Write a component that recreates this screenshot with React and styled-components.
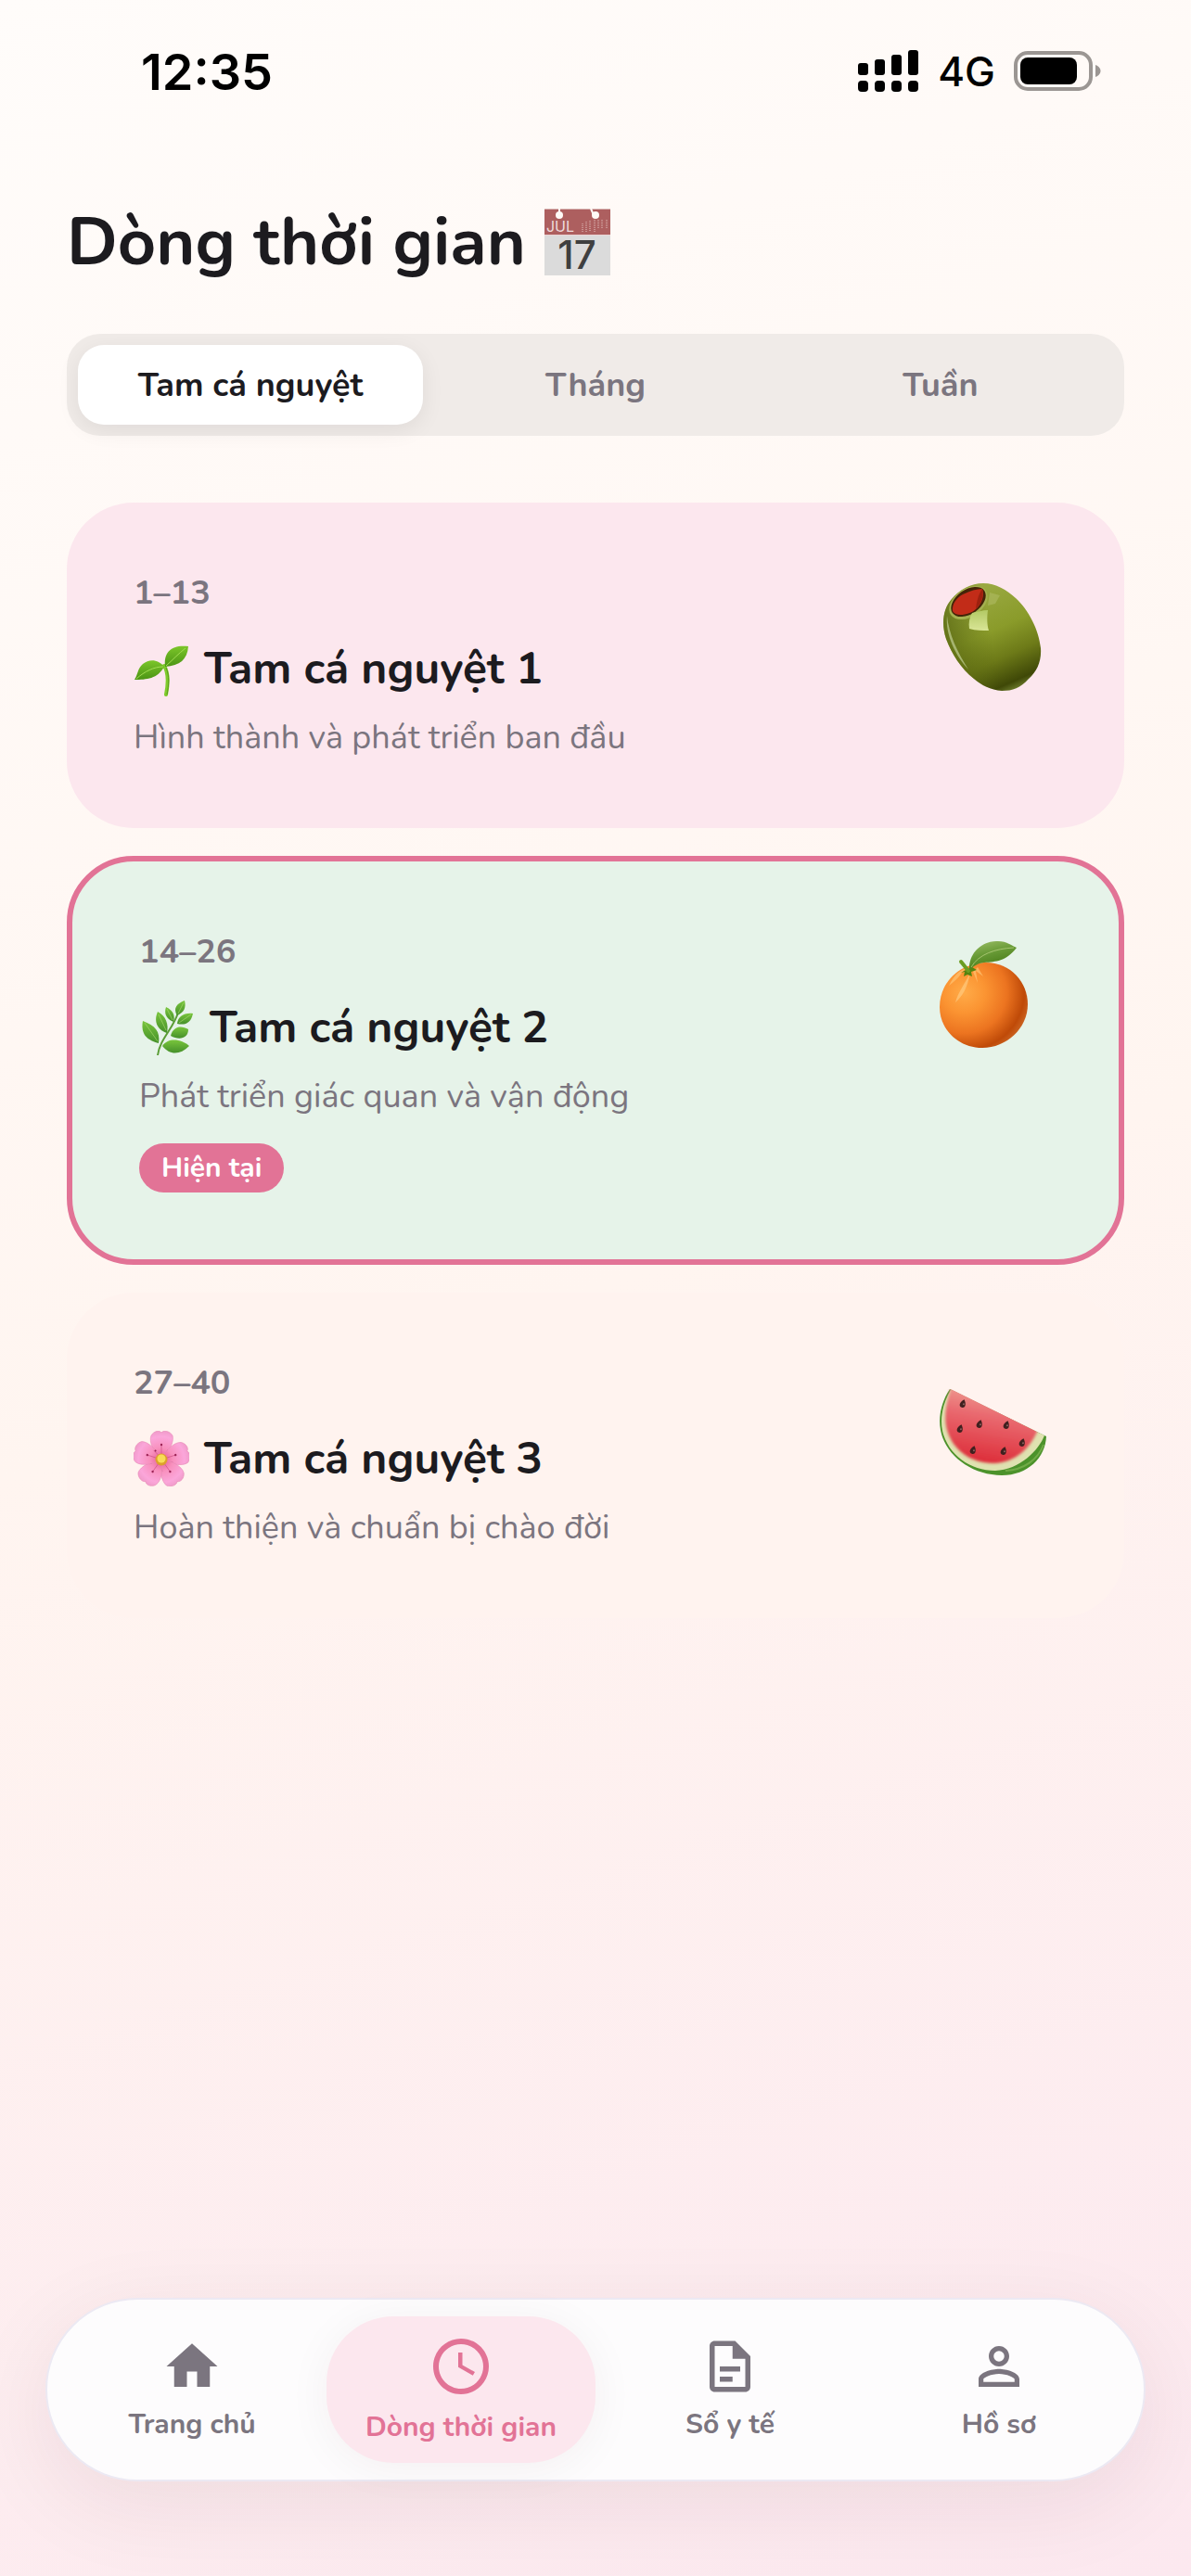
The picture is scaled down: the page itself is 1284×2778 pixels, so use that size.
import React, { useState } from 'react'
import styled, { createGlobalStyle } from 'styled-components';
import { MdHome, MdPersonOutline } from 'react-icons/md';

const GlobalStyle = createGlobalStyle`
  * {
    box-sizing: border-box;
  }
  body {
    margin: 0;
    font-family: Nunito, Lato, "Open Sans", sans-serif;
    color: #1c1b1f;
  }
  button {
    font-family: inherit;
    border: none;
    background: none;
    padding: 0;
  }
  h1, h2, p {
    margin: 0;
  }
`;

const SignalIcon = () => (
  <svg width="66" height="46" viewBox="0 0 66 46" aria-hidden="true">
    <rect x="0" y="14" width="11" height="13" rx="3" />
    <rect x="18" y="10" width="11" height="17" rx="3" />
    <rect x="36" y="5" width="11" height="22" rx="3" />
    <rect x="54" y="0" width="11" height="27" rx="3" />
    <rect x="0" y="33" width="11" height="12" rx="4" />
    <rect x="18" y="33" width="11" height="12" rx="4" />
    <rect x="36" y="33" width="11" height="12" rx="4" />
    <rect x="54" y="33" width="11" height="12" rx="4" />
  </svg>
)

const BatteryIcon = () => (
  <svg width="95" height="44" viewBox="0 0 95 44" aria-hidden="true">
    <rect x="2" y="2" width="81" height="39" rx="13" fill="none" stroke="#9b9693" strokeWidth="4" />
    <rect x="7" y="7" width="61" height="29" rx="8" />
    <path d="M88 15c3 1 5.5 3.5 5.5 6.5S91 27 88 28z" fill="#9b9693" />
  </svg>
)

const CalendarIcon = () => (
  <svg width="71" height="72" viewBox="0 0 71 72" overflow="visible" aria-hidden="true">
    <rect x="0" y="0" width="71" height="72" fill="#dbdbdb" />
    <rect x="0" y="0" width="71" height="28" fill="#ad5f5f" />
    <path d="M0 .5h71" stroke="#d8b3b1" />
    <path d="M0 28.5h71" stroke="#ebd5d5" />
    <path d="M16 0v7M50 0l3 7" stroke="#fffaf7" strokeWidth="2" />
    <circle cx="16" cy="7" r="4" fill="#fffaf7" />
    <circle cx="55" cy="7" r="4" fill="#fffaf7" />
    <path d="M41 16v9M45 14v11M49 13v12M54 12v13M58 12v10M62 12v10M67 12v9" stroke="#c99391" strokeWidth="2" strokeDasharray="1 1" />
    <text x="17" y="25" textAnchor="middle" fontFamily="Inter, sans-serif" fontSize="16" fontWeight="400" fill="#eddcdc">JUL</text>
    <text x="35" y="65" textAnchor="middle" fontFamily="Inter, sans-serif" fontSize="42" fontWeight="500" fill="#3f3f3f">17</text>
  </svg>
)

const SproutIcon = () => (
  <svg width="60" height="60" viewBox="0 0 60 60" aria-hidden="true">
    <defs>
      <linearGradient id="sproutLeaf" x1="0" y1="0" x2="0" y2="1">
        <stop offset="0" stopColor="#7cc62a" />
        <stop offset="1" stopColor="#4b9414" />
      </linearGradient>
    </defs>
    <path d="M33 27C38 35 37 48 35 58" fill="none" stroke="#7fcb2c" strokeWidth="4" strokeLinecap="round" />
    <path d="M35 29C39 38 38 48 36 58" fill="none" stroke="#579d18" strokeWidth="1" />
    <path d="M34 28C32 12 41 4 59 6C58 20 50 27 34 28z" fill="url(#sproutLeaf)" />
    <path d="M33 28C27 20 17 19 10 25C4 30 5 36 1 42C14 42 26 41 33 28z" fill="url(#sproutLeaf)" />
    <path d="M35 27C42 21 48 14 56 8M32 28C22 28 12 33 3 41" fill="none" stroke="#a4dc54" strokeWidth="1" />
  </svg>
)

const HerbIcon = () => (
  <svg width="60" height="60" viewBox="0 0 60 60" aria-hidden="true">
    <defs>
      <linearGradient id="herbLeaf" x1="0" y1="0" x2="0" y2="1">
        <stop offset="0" stopColor="#79c53c" />
        <stop offset="1" stopColor="#45902a" />
      </linearGradient>
    </defs>
    <path d="M20 60C22 43 37 31 42 14" fill="none" stroke="#5a9c35" strokeWidth="2" />
    <g fill="url(#herbLeaf)">
      <path d="M21 47C5 43 2 34 4 23C17 28 23 34 21 47z" />
      <path d="M30 36C18 32 16 22 20 13C29 18 32 26 30 36z" />
      <path d="M37 24C28 20 27 14 29 8C37 12 39 17 37 24z" />
      <path d="M41 17C36 9 41 4 49 1C51 9 48 14 41 17z" />
      <path d="M41 26C42 18 48 14 58 15C56 25 50 28 41 26z" />
      <path d="M34 39C37 28 46 28 53 32C53 42 43 44 34 39z" />
      <path d="M25 50C32 40 46 43 54 50C44 60 33 60 25 50z" />
    </g>
    <path d="M6 25L20 45M21 16L29 33M30 10L36 22M48 3L42 15M56 16L43 25" fill="none" stroke="#a2d66a" strokeWidth="1" opacity=".7" />
  </svg>
)

const FlowerIcon = () => (
  <svg width="60" height="60" viewBox="0 0 60 60" aria-hidden="true">
    <defs>
      <radialGradient id="petal" gradientUnits="userSpaceOnUse" cx="30" cy="31" r="31">
        <stop offset="0" stopColor="#e2568f" />
        <stop offset=".4" stopColor="#f890bd" />
        <stop offset=".8" stopColor="#fba6da" />
        <stop offset="1" stopColor="#f09bca" />
      </radialGradient>
    </defs>
    {[0, 72, 144, 216, 288].map((turn) => (
      <g key={turn} transform={`rotate(${turn} 30 31)`}>
        <path d="M30 31C22 24 16 12 19 5C22 0 28 -1 30 2C32 -1 39 0 42 5C44 12 38 24 30 31z" fill="url(#petal)" stroke="#e88bb8" strokeWidth=".6" />
        <path d="M30 31V15M31 31L37 20" stroke="#cf5386" strokeWidth=".7" />
        <circle cx="30" cy="15" r="1.2" fill="#9c2456" />
        <circle cx="37" cy="22" r="1" fill="#9c2456" />
      </g>
    ))}
    <circle cx="30" cy="31" r="6.5" fill="#dda02c" />
    <circle cx="30" cy="30" r="4.5" fill="#f8dc56" />
  </svg>
)

const OliveIcon = () => (
  <svg width="132" height="132" viewBox="0 0 132 132" aria-hidden="true">
    <defs>
      <linearGradient id="oliveSkin" x1=".3" y1="0" x2=".7" y2="1">
        <stop offset="0" stopColor="#9cab45" />
        <stop offset=".45" stopColor="#8a9b2a" />
        <stop offset=".7" stopColor="#6d7a18" />
        <stop offset=".93" stopColor="#3f4807" />
        <stop offset="1" stopColor="#69782a" />
      </linearGradient>
      <linearGradient id="oliveShade" x1="0" y1=".6" x2="1" y2=".4">
        <stop offset="0" stopColor="#55630f" stopOpacity=".8" />
        <stop offset=".3" stopColor="#55630f" stopOpacity=".3" />
        <stop offset=".5" stopColor="#55630f" stopOpacity="0" />
      </linearGradient>
      <linearGradient id="oliveShine" x1="0" y1="0" x2="0" y2="1">
        <stop offset="0" stopColor="#b3c965" />
        <stop offset="1" stopColor="#d9e596" />
      </linearGradient>
    </defs>
    <path d="M52 15C66 15 77 22 87 31C101 44 112 65 114 85C115 99 110 110 101 118C92 128 84 131 72 131C60 130 50 125 42 118C28 107 18 91 12 75C7 60 8 43 18 32C26 22 39 15 52 15z" fill="url(#oliveSkin)" />
    <path d="M52 15C66 15 77 22 87 31C101 44 112 65 114 85C115 99 110 110 101 118C92 128 84 131 72 131C60 130 50 125 42 118C28 107 18 91 12 75C7 60 8 43 18 32C26 22 39 15 52 15z" fill="url(#oliveShade)" />
    <path d="M13 50C11 70 22 93 36 108C24 89 15 70 13 50z" fill="#b5c384" opacity=".8" />
    <ellipse cx="36" cy="36" rx="23" ry="15" transform="rotate(-35 36 36)" fill="#a4b150" />
    <ellipse cx="36" cy="35" rx="21" ry="13" transform="rotate(-35 36 35)" fill="#442408" />
    <path d="M19 45C18 37 24 30 30 27C38 23 45 21 51 21C54 28 50 38 44 43C38 49 22 52 19 45z" fill="#c22c18" />
    <path d="M51 21C53 28 50 37 44 43C45 36 46 28 51 21z" fill="#8d1c0b" opacity=".7" />
    <path d="M40 47C45 46 51 44 57 44C56 51 56 60 58 66C51 66 44 66 37 64C36 58 37 52 40 47z" fill="url(#oliveShine)" />
    <path d="M59 25L70 28L65 37L57 39z" fill="#afbb62" opacity=".6" />
  </svg>
)

const OrangeIcon = () => (
  <svg width="132" height="132" viewBox="0 0 132 132" aria-hidden="true">
    <defs>
      <radialGradient id="orangeSkin" cx=".28" cy=".35" r=".8">
        <stop offset="0" stopColor="#ffab48" />
        <stop offset=".3" stopColor="#fb9432" />
        <stop offset=".6" stopColor="#ec7420" />
        <stop offset=".85" stopColor="#bf4a08" />
        <stop offset="1" stopColor="#cf6d2a" />
      </radialGradient>
      <linearGradient id="orangeLeaf" x1="0" y1="0" x2=".4" y2="1">
        <stop offset="0" stopColor="#9fc06a" />
        <stop offset=".5" stopColor="#689a36" />
        <stop offset="1" stopColor="#467a16" />
      </linearGradient>
    </defs>
    <path d="M59 37C87 36 106 58 106 82C106 108 83 129 57 129C31 129 11 109 11 85C11 60 30 39 59 37z" fill="url(#orangeSkin)" />
    <path d="M35 48C31 54 26 58 21 62C27 50 33 45 40 43zM47 47L52 59L50 46L58 52L52 42z" fill="#ffc373" opacity=".7" />
    <path d="M44 48C38 60 31 69 28 80C36 73 41 64 44 48z" fill="#ffd188" opacity=".6" />
    <path d="M34 48L41 44L46 42L51 45L45 47L46 52L41 50L37 52L38 47z" fill="#55830f" />
    <path d="M34 36L42 46" stroke="#6b9d22" strokeWidth="4" strokeLinecap="round" />
    <path d="M43 45C42 25 59 13 74 14C82 14 88 18 94 21C82 36 72 36 59 37C51 38 48 41 43 45z" fill="url(#orangeLeaf)" />
    <path d="M45 42C53 28 71 22 91 21" fill="none" stroke="#bfd688" strokeWidth="1" opacity=".7" />
  </svg>
)

const WatermelonIcon = () => (
  <svg width="132" height="132" viewBox="0 0 132 132" aria-hidden="true">
    <defs>
      <linearGradient id="melonFlesh" x1=".6" y1="0" x2=".4" y2="1">
        <stop offset="0" stopColor="#f0a99a" />
        <stop offset=".4" stopColor="#e96a70" />
        <stop offset="1" stopColor="#dd2c38" />
      </linearGradient>
      <filter id="melonEdge" x="-10%" y="-10%" width="120%" height="120%">
        <feGaussianBlur stdDeviation="1.5" />
      </filter>
      <clipPath id="melonCut">
        <path d="M17 32L118 82L132 132H0V32z" />
      </clipPath>
    </defs>
    <path d="M16 32C8 44 3 60 6 76C11 104 40 125 72 125C100 125 119 106 120 83z" fill="#4c922b" />
    <path d="M117 92C111 108 96 119 76 120" fill="none" stroke="#8abd5a" strokeWidth="2" opacity=".6" />
    <path d="M17 33C9 46 5 62 8 77C14 103 38 120 65 120C91 119 112 98 118 82z" fill="#dfe2b0" />
    <g clipPath="url(#melonCut)">
      <path d="M18 28C12 47 9 62 13 76C19 98 39 112 63 112C88 111 103 95 111 76z" fill="url(#melonFlesh)" filter="url(#melonEdge)" />
    </g>
    {[[30, 48], [27, 75], [48, 70], [77, 71], [94, 90], [41, 98], [74, 99]].map(([x, y]) => (
      <g key={`${x}-${y}`} transform={`translate(${x} ${y}) rotate(18)`}>
        <path d="M0 -5C4 -1 4 4 0 4C-4 4 -4 -1 0 -5z" fill="#40201f" />
        <circle cx="1" cy="0" r="1" fill="#8c6260" />
      </g>
    ))}
  </svg>
)

const ClockIcon = () => (
  <svg width="72" height="72" viewBox="0 0 24 24" fill="currentColor" aria-hidden="true">
    <path d="M12 2C6.48 2 2 6.48 2 12s4.48 10 10 10 10-4.48 10-10S17.52 2 12 2zm0 18c-4.42 0-8-3.58-8-8s3.58-8 8-8 8 3.58 8 8-3.58 8-8 8z" />
    <path d="M12.5 7H11v5.25l5.25 3 .75-1.23-4.5-2.52z" />
  </svg>
)

const NoteIcon = () => (
  <svg width="66" height="66" viewBox="0 0 24 24" fill="currentColor" aria-hidden="true">
    <path fillRule="evenodd" d="M14 2H6c-1.1 0-2 .9-2 2v16c0 1.1.9 2 2 2h12c1.1 0 2-.9 2-2V8zM6 20V4h7v5h5v11z" />
    <path d="M8 12h8v2H8zM8 16h5v2H8z" />
  </svg>
)

const tabs = ['Tam cá nguyệt', 'Tháng', 'Tuần'];

const trimesters = [
  {
    weeks: '1–13',
    icon: <SproutIcon />,
    name: 'Tam cá nguyệt 1',
    text: 'Hình thành và phát triển ban đầu',
    fruit: <OliveIcon />,
    color: '#fce7ee',
  },
  {
    weeks: '14–26',
    icon: <HerbIcon />,
    name: 'Tam cá nguyệt 2',
    text: 'Phát triển giác quan và vận động',
    fruit: <OrangeIcon />,
    color: '#e6f3e9',
    current: true,
  },
  {
    weeks: '27–40',
    icon: <FlowerIcon />,
    name: 'Tam cá nguyệt 3',
    text: 'Hoàn thiện và chuẩn bị chào đời',
    fruit: <WatermelonIcon />,
    color: '#fff3ef',
  },
];

const links = [
  { label: 'Trang chủ', icon: <MdHome size={66} /> },
  { label: 'Dòng thời gian', icon: <ClockIcon />, active: true },
  { label: 'Sổ y tế', icon: <NoteIcon /> },
  { label: 'Hồ sơ', icon: <MdPersonOutline size={66} /> },
];

function App() {
  const [tab, setTab] = useState(0);

  return (
    <Page>
      <GlobalStyle />
      <StatusBar>
        <Time>12:35</Time>
        <Status>
          <SignalIcon />
          <span>4G</span>
          <BatteryIcon />
        </Status>
      </StatusBar>
      <Main>
        <Title>
          Dòng thời gian
          <CalendarIcon />
        </Title>
        <Tabs>
          {tabs.map((name, i) => (
            <Tab key={name} type="button" aria-pressed={i === tab} $active={i === tab} onClick={() => setTab(i)}>
              {name}
            </Tab>
          ))}
        </Tabs>
        <Cards>
          {trimesters.map((item) => (
            <Card key={item.weeks} $color={item.color} $current={item.current}>
              <Info>
                <Weeks>{item.weeks}</Weeks>
                <Name>
                  {item.icon}
                  {item.name}
                </Name>
                <Text>{item.text}</Text>
                {item.current && <Badge>Hiện tại</Badge>}
              </Info>
              <Fruit>{item.fruit}</Fruit>
            </Card>
          ))}
        </Cards>
      </Main>
      <Nav>
        {links.map((link) => (
          <NavLink key={link.label} href="#" $active={link.active}>
            {link.icon}
            <span>{link.label}</span>
          </NavLink>
        ))}
      </Nav>
    </Page>
  )
}

const Page = styled.div`
  min-height: 100vh;
  display: flex;
  flex-direction: column;
  background: linear-gradient(162deg, #fffcfa, #fff5f0 50%, #fce8ef);
`;

const StatusBar = styled.header`
  height: 152px;
  padding: 0 96px 0 152px;
  display: flex;
  align-items: center;
  justify-content: space-between;
  font-family: Inter, sans-serif;
  color: #000;
`;

const Time = styled.span`
  padding-top: 2px;
  font-size: 54px;
  font-weight: 600;
`;

const Status = styled.div`
  display: flex;
  align-items: center;
  gap: 20px;
  padding-top: 2px;
  font-size: 44px;
  font-weight: 500;
`;

const Main = styled.main`
  padding: 60px 72px;
`;

const Title = styled.h1`
  display: flex;
  align-items: center;
  gap: 20px;
  font-size: 72px;
  line-height: 98px;
  font-weight: 700;
`;

const Tabs = styled.div`
  display: flex;
  margin-top: 50px;
  padding: 12px;
  border-radius: 36px;
  background-color: #f0ebe8;
`;

const Tab = styled.button`
  flex: 1;
  height: 86px;
  border-radius: 28px;
  font-size: 36px;
  font-weight: 700;
  color: ${(props) => (props.$active ? '#1c1b1f' : '#7b757f')};
  background-color: ${(props) => (props.$active ? '#fff' : 'transparent')};
  box-shadow: ${(props) => (props.$active ? '0 6px 24px rgba(0, 0, 0, 0.07)' : 'none')};
`;

const Cards = styled.div`
  display: flex;
  flex-direction: column;
  gap: 30px;
  margin-top: 72px;
`;

const Card = styled.section`
  display: flex;
  justify-content: space-between;
  padding: 72px;
  border-radius: 72px;
  background-color: ${(props) => props.$color};
  border: ${(props) => (props.$current ? '6px solid #e27396' : 'none')};
`;

const Info = styled.div`
  display: flex;
  flex-direction: column;
  align-items: flex-start;
`;

const Weeks = styled.p`
  font-size: 36px;
  line-height: 52px;
  font-weight: 700;
  color: #7b757f;
`;

const Name = styled.h2`
  display: flex;
  align-items: center;
  gap: 16px;
  margin-top: 22px;
  font-size: 48px;
  line-height: 66px;
  font-weight: 700;
`;

const Text = styled.p`
  margin-top: 17px;
  font-size: 36px;
  line-height: 50px;
  color: #7b757f;
`;

const Badge = styled.span`
  margin-top: 25px;
  padding: 6px 24px;
  border-radius: 27px;
  font-size: 30px;
  line-height: 41px;
  font-weight: 700;
  color: #fff;
  background-color: #e27396;
`;

const Fruit = styled.div`
  flex-shrink: 0;
  height: 132px;
`;

const Nav = styled.nav`
  display: flex;
  align-items: center;
  margin: auto 49px 102px;
  padding: 18px 11px;
  border: 2px solid #ece9f3;
  border-radius: 99px;
  background-color: #fdfcfd;
  box-shadow: 0 24px 96px rgba(60, 20, 40, 0.08);
`;

const NavLink = styled.a`
  flex: 1;
  display: flex;
  flex-direction: column;
  align-items: center;
  gap: 9px;
  padding: 18px 0;
  border-radius: 72px;
  font-size: 30px;
  line-height: 41px;
  font-weight: 700;
  text-decoration: none;
  color: ${(props) => (props.$active ? '#e27396' : '#7b757f')};
  background-color: ${(props) => (props.$active ? '#fce7ee' : 'transparent')};
  box-shadow: ${(props) => (props.$active ? '0 6px 48px rgba(60, 0, 20, 0.05)' : 'none')};
`;

export default App
